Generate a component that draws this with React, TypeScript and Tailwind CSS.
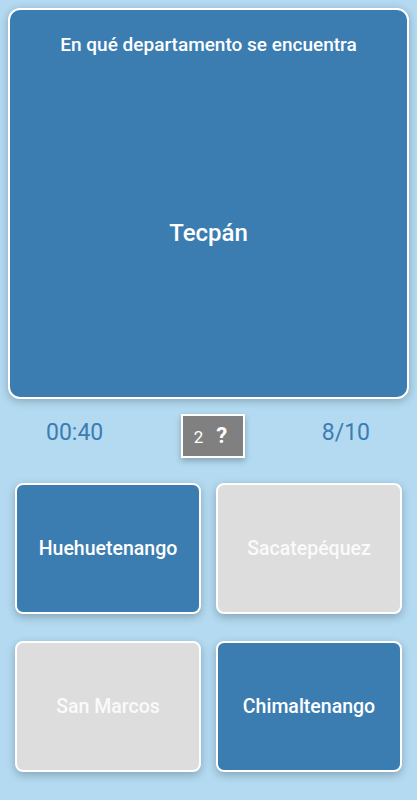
import React from "react";

const options = [
  { label: "Huehuetenango", active: true },
  { label: "Sacatepéquez", active: false },
  { label: "San Marcos", active: false },
  { label: "Chimaltenango", active: true },
];

export default function App() {
  return (
    <div className="w-[417px] h-[800px] bg-[#b3daf1] font-['Roboto',sans-serif] px-2 pt-2 overflow-hidden">
      <div className="h-[391px] rounded-xl border-2 border-white bg-[#3b7db1] shadow-[0_2px_8px_rgba(0,0,0,0.25)] flex flex-col">
        <div className="pt-[23px] pb-[11px] text-center text-white text-[19px] font-medium leading-6">
          En qué departamento se encuentra
        </div>
        <div className="flex-1 flex items-center justify-center text-white text-[24px] font-medium">
          Tecpán
        </div>
      </div>

      <div className="mt-[15px] h-[44px] flex items-center justify-between pl-[38px] pr-[39px]">
        <span className="text-[23px] text-[#3b7db1] mb-[6px]">00:40</span>
        <div className="w-[64px] h-[44px] bg-[#808080] border-2 border-white shadow-[0_3px_6px_rgba(0,0,0,0.25)] flex items-center justify-center gap-[13px] pr-[4px] text-white">
          <span className="text-[17px] leading-none mt-[3px]">2</span>
          <span className="text-[22px] font-bold leading-none">?</span>
        </div>
        <span className="text-[23px] text-[#3b7db1] mb-[6px]">8/10</span>
      </div>

      <div className="mt-[25px] px-[7px] grid grid-cols-2 gap-x-[15px] gap-y-[27px]">
        {options.map((o) => (
          <div
            key={o.label}
            className={
              "h-[131px] rounded-lg border-2 border-white shadow-[0_3px_8px_rgba(0,0,0,0.25)] flex items-center justify-center text-[19.5px] font-medium " +
              (o.active ? "bg-[#3b7db1] text-white" : "bg-[#dddddd] text-[#fafafa]")
            }
          >
            {o.label}
          </div>
        ))}
      </div>
    </div>
  );
}
